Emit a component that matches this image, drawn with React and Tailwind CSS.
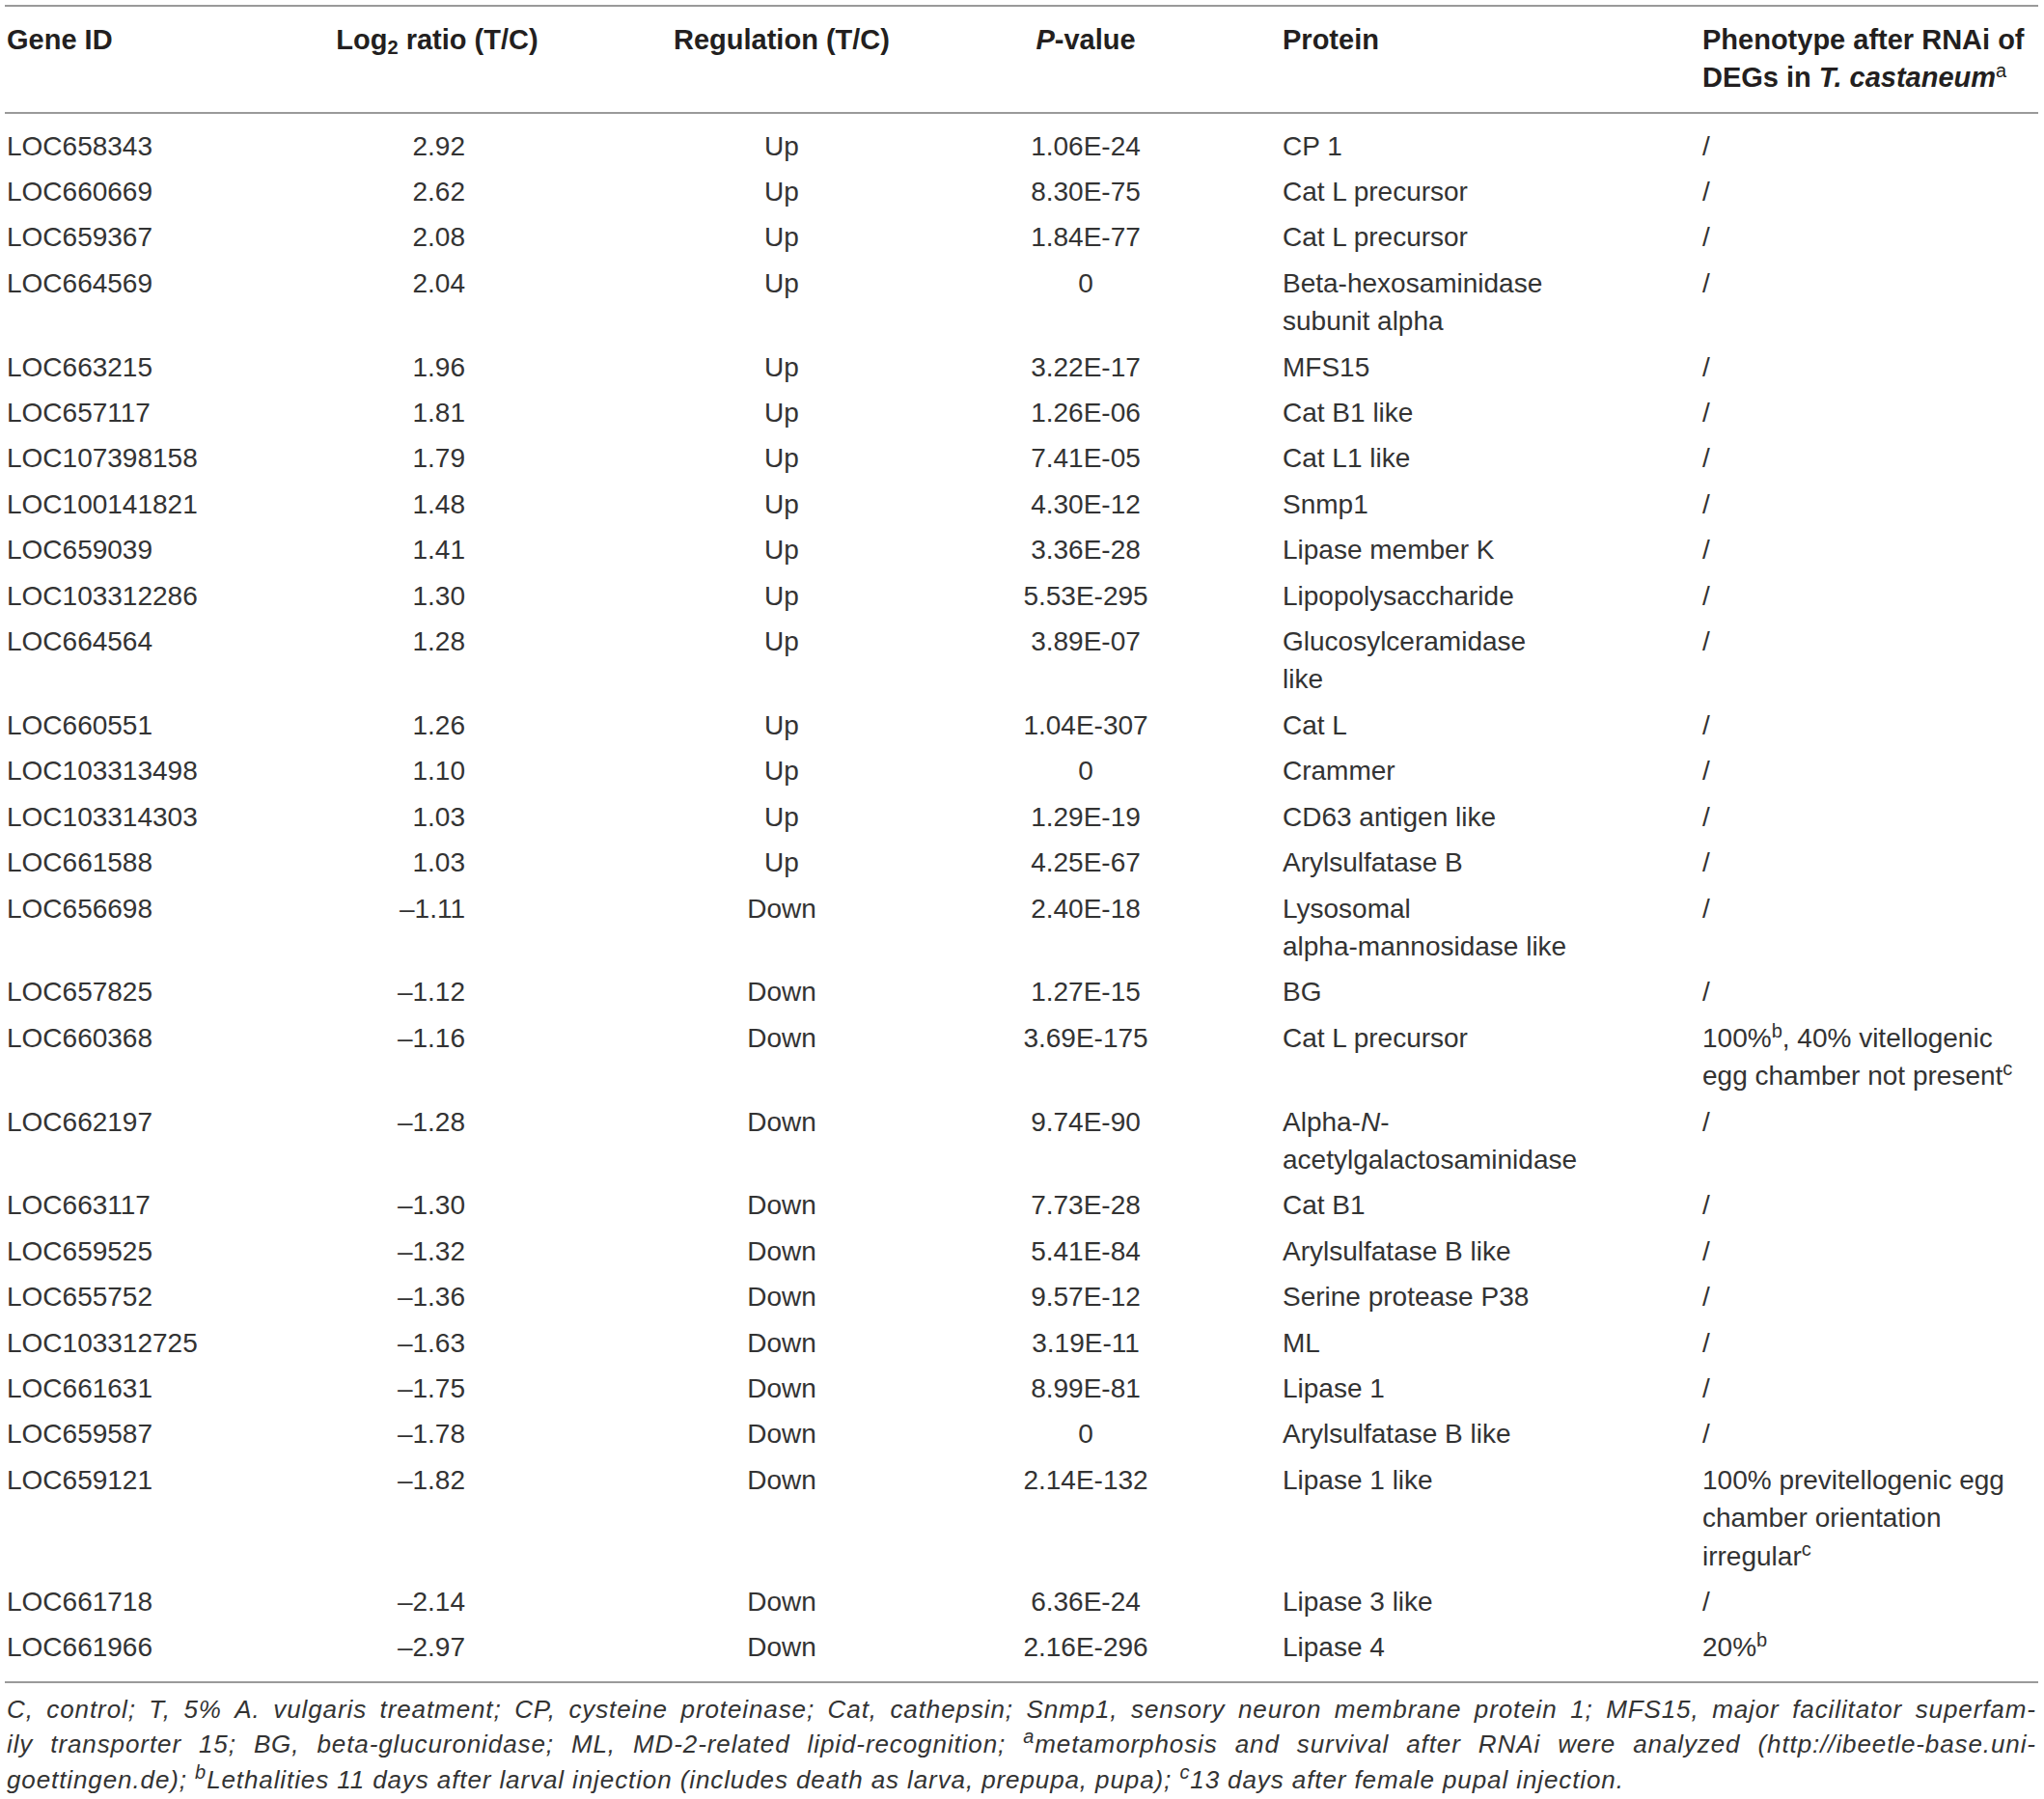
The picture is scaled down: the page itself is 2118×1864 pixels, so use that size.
import React from "react";

const S = ({ children }) => <sup className="text-[20px] font-normal">{children}</sup>;

const rows = [
  ["LOC658343", "2.92", "Up", "1.06E-24", ["CP 1"], ["/"]],
  ["LOC660669", "2.62", "Up", "8.30E-75", ["Cat L precursor"], ["/"]],
  ["LOC659367", "2.08", "Up", "1.84E-77", ["Cat L precursor"], ["/"]],
  ["LOC664569", "2.04", "Up", "0", ["Beta-hexosaminidase", "subunit alpha"], ["/"]],
  ["LOC663215", "1.96", "Up", "3.22E-17", ["MFS15"], ["/"]],
  ["LOC657117", "1.81", "Up", "1.26E-06", ["Cat B1 like"], ["/"]],
  ["LOC107398158", "1.79", "Up", "7.41E-05", ["Cat L1 like"], ["/"]],
  ["LOC100141821", "1.48", "Up", "4.30E-12", ["Snmp1"], ["/"]],
  ["LOC659039", "1.41", "Up", "3.36E-28", ["Lipase member K"], ["/"]],
  ["LOC103312286", "1.30", "Up", "5.53E-295", ["Lipopolysaccharide"], ["/"]],
  ["LOC664564", "1.28", "Up", "3.89E-07", ["Glucosylceramidase", "like"], ["/"]],
  ["LOC660551", "1.26", "Up", "1.04E-307", ["Cat L"], ["/"]],
  ["LOC103313498", "1.10", "Up", "0", ["Crammer"], ["/"]],
  ["LOC103314303", "1.03", "Up", "1.29E-19", ["CD63 antigen like"], ["/"]],
  ["LOC661588", "1.03", "Up", "4.25E-67", ["Arylsulfatase B"], ["/"]],
  ["LOC656698", "\u20131.11", "Down", "2.40E-18", ["Lysosomal", "alpha-mannosidase like"], ["/"]],
  ["LOC657825", "\u20131.12", "Down", "1.27E-15", ["BG"], ["/"]],
  [
    "LOC660368",
    "\u20131.16",
    "Down",
    "3.69E-175",
    ["Cat L precursor"],
    [
      <>100%<S>b</S>, 40% vitellogenic</>,
      <>egg chamber not present<S>c</S></>,
    ],
  ],
  [
    "LOC662197",
    "\u20131.28",
    "Down",
    "9.74E-90",
    [<>Alpha-<i>N</i>-</>, "acetylgalactosaminidase"],
    ["/"],
  ],
  ["LOC663117", "\u20131.30", "Down", "7.73E-28", ["Cat B1"], ["/"]],
  ["LOC659525", "\u20131.32", "Down", "5.41E-84", ["Arylsulfatase B like"], ["/"]],
  ["LOC655752", "\u20131.36", "Down", "9.57E-12", ["Serine protease P38"], ["/"]],
  ["LOC103312725", "\u20131.63", "Down", "3.19E-11", ["ML"], ["/"]],
  ["LOC661631", "\u20131.75", "Down", "8.99E-81", ["Lipase 1"], ["/"]],
  ["LOC659587", "\u20131.78", "Down", "0", ["Arylsulfatase B like"], ["/"]],
  [
    "LOC659121",
    "\u20131.82",
    "Down",
    "2.14E-132",
    ["Lipase 1 like"],
    [
      "100% previtellogenic egg",
      "chamber orientation",
      <>irregular<S>c</S></>,
    ],
  ],
  ["LOC661718", "\u20132.14", "Down", "6.36E-24", ["Lipase 3 like"], ["/"]],
  ["LOC661966", "\u20132.97", "Down", "2.16E-296", ["Lipase 4"], [<>20%<S>b</S></>]],
];

const GRID = "grid grid-cols-[295px_306px_408px_222px_528px_348px]";

const Lines = ({ items }) => (
  <>
    {items.map((t, i) => (
      <div key={i} className="whitespace-nowrap">
        {t}
      </div>
    ))}
  </>
);

const line1 =
  "C, control; T, 5% A. vulgaris treatment; CP, cysteine proteinase; Cat, cathepsin; Snmp1, sensory neuron membrane protein 1; MFS15, major facilitator superfam-".split(
    " "
  );

const line2 = [
  "ily",
  "transporter",
  "15;",
  "BG,",
  "beta-glucuronidase;",
  "ML,",
  "MD-2-related",
  "lipid-recognition;",
  <>
    <S>a</S>metamorphosis
  </>,
  "and",
  "survival",
  "after",
  "RNAi",
  "were",
  "analyzed",
  "(http://ibeetle-base.uni-",
];

export default function App() {
  return (
    <div className="w-[2118px] min-h-[1864px] bg-white font-['Liberation_Sans',Arial,sans-serif] text-[#231f20]">
      <div className="ml-[5px] w-[2107px] pt-[5px]">
        <div className="h-[2px] bg-[#9a9a9a]" />
        {/* header */}
        <div className={`${GRID} pt-[15px] pb-[15px] text-[29px] leading-[39.3px] font-bold`}>
          <div className="pl-[2px]">Gene ID</div>
          <div className="text-center">
            Log<sub className="text-[20px]">2</sub> ratio (T/C)
          </div>
          <div className="text-center">Regulation (T/C)</div>
          <div className="text-center">
            <i>P</i>-value
          </div>
          <div className="pl-[93px]">Protein</div>
          <div className="whitespace-nowrap">
            <div>Phenotype after RNAi of</div>
            <div>
              DEGs in <i>T. castaneum</i>
              <S>a</S>
            </div>
          </div>
        </div>
        <div className="h-[2px] bg-[#9a9a9a]" />
        {/* body */}
        <div className="pt-[10px] pb-[11px] text-[28px] leading-[39.4px] text-[#333333]">
          {rows.map((r, i) => (
            <div key={i} className={`${GRID} py-[4px]`}>
              <div className="pl-[2px]">{r[0]}</div>
              <div className="text-right pr-[124px]">{r[1]}</div>
              <div className="text-center">{r[2]}</div>
              <div className="text-center">{r[3]}</div>
              <div className="pl-[93px]">
                <Lines items={r[4]} />
              </div>
              <div>
                <Lines items={r[5]} />
              </div>
            </div>
          ))}
        </div>
        <div className="h-[2px] bg-[#9a9a9a]" />
        {/* footnotes */}
        <div className="pt-[9px] pl-[2px] pr-[2px] italic text-[26px] tracking-[0.9px] leading-[36.5px] text-[#333333]">
          <div className="whitespace-nowrap flex justify-between">
            {line1.map((w, i) => (
              <span key={i}>{w}</span>
            ))}
          </div>
          <div className="whitespace-nowrap flex justify-between">
            {line2.map((w, i) => (
              <span key={i}>{w}</span>
            ))}
          </div>
          <div className="whitespace-nowrap">
            goettingen.de); <S>b</S>Lethalities 11 days after larval injection (includes death as larva, prepupa, pupa);{" "}
            <S>c</S>13 days after female pupal injection.
          </div>
        </div>
      </div>
    </div>
  );
}
